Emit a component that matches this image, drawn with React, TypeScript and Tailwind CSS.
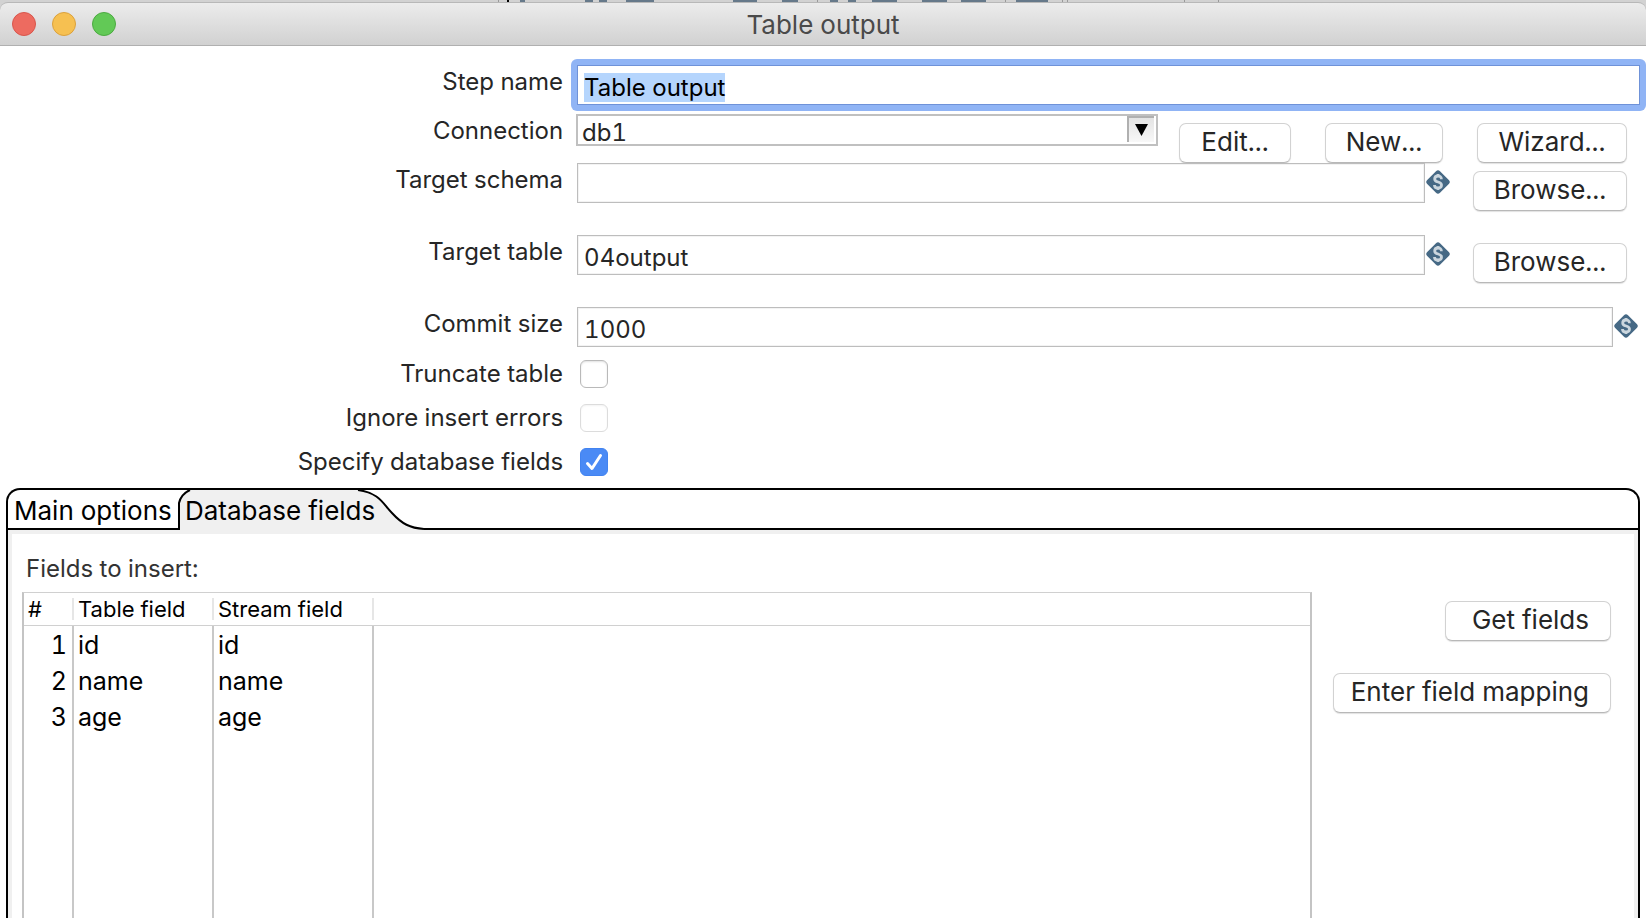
import { useEffect, useRef } from "react";
import type { ReactNode } from "react";

const fieldClass =
  "h-[40px] min-w-0 flex-1 ml-px border border-[#bdbdbd] bg-white px-[6px] pt-[5px] text-[24px] leading-[32px] text-[#262626] shadow-[inset_0_0_0_1px_#f3f3f3] outline-none";

function Row({ id, label, className, children }: { id: string; label: string; className?: string; children: ReactNode }) {
  return (
    <div className={`flex items-start ${className ?? ""}`}>
      <label htmlFor={id} className="w-[35vw] shrink-0 pt-[3px] pr-[13px] text-right text-[24px] leading-[28px] text-[#262626]">
        {label}
      </label>
      {children}
    </div>
  );
}

function PushButton({ className, children }: { className: string; children: ReactNode }) {
  return (
    <button
      type="button"
      className={`h-[40px] shrink-0 rounded-[7px] border border-[#d2d2d2] border-b-[#b8b8b8] bg-white pb-[3px] text-[26px] leading-[32px] whitespace-nowrap text-[#262626] shadow-[0_1px_1px_rgba(0,0,0,0.12)] ${className}`}
    >
      {children}
    </button>
  );
}

function VariableIcon() {
  return (
    <svg className="mt-[7px] ml-px h-[24px] w-[24px] shrink-0" viewBox="0 0 24 24" aria-hidden="true">
      <path d="M10 1.2Q12-.8 14 1.2L22.8 10Q24.8 12 22.8 14L14 22.8Q12 24.8 10 22.8L1.2 14Q-.8 12 1.2 10Z" fill="#466985" />
      <path d="M15.400 9.200C15.400 6.900 14 6 12 6S8.700 7 8.700 8.900C8.700 13 15.500 11 15.500 15C15.500 17 14 18 12 18S8.500 17 8.500 14.900M12 4V6M12 18V20" fill="none" stroke="#cbd6de" strokeWidth="2.8" />
    </svg>
  );
}

function Check({ id, on, disabled }: { id: string; on?: boolean; disabled?: boolean }) {
  return (
    <span className="relative mt-[3px] ml-[4px] h-[28px] w-[28px]">
      <input
        id={id}
        type="checkbox"
        defaultChecked={on}
        disabled={disabled}
        className="block h-[28px] w-[28px] appearance-none rounded-[6px] border border-[#b9b9b9] bg-white shadow-[inset_0_1px_2px_rgba(0,0,0,0.12)] checked:border-[#4283f0] checked:bg-[#4a8af5] checked:shadow-none disabled:border-[#dcdcdc] disabled:shadow-[inset_0_1px_2px_rgba(0,0,0,0.05)]"
      />
      {on && (
        <svg className="pointer-events-none absolute inset-0" viewBox="0 0 28 28" aria-hidden="true">
          <path d="M7.500 15.500L12 20.500L20.500 7.500" fill="none" stroke="#fff" strokeWidth="3" strokeLinecap="round" strokeLinejoin="round" />
        </svg>
      )}
    </span>
  );
}

const rows = ["id", "name", "age"];

export default function App() {
  const stepName = useRef<HTMLInputElement>(null);
  useEffect(() => {
    stepName.current?.focus();
    stepName.current?.select();
  }, []);

  return (
    <div className="flex h-screen flex-col overflow-hidden bg-white font-['Inter','Liberation_Sans',sans-serif] tabular-nums">
      <div className="h-[46px] shrink-0 bg-[#d2d2d2]">
        <svg className="block h-[2px] w-full" viewBox="0 0 1646 2" preserveAspectRatio="none" aria-hidden="true">
          <path d="M507 0h2v2h-2z" fill="#000" />
          <path d="M520 0h5v2h-5zM585 0h8v2h-8zM599 0h8v2h-8zM626 0h28v2h-28zM733 0h24v2h-24zM782 0h16v2h-16zM830 0h8v2h-8zM848 0h8v2h-8zM872 0h25v2h-25zM922 0h25v2h-25zM961 0h25v2h-25zM1016 0h32v2h-32z" fill="#66798a" />
          <path d="M498 0h1v2h-1zM817 0h1v2h-1zM1005 0h1v2h-1zM1062 0h1v2h-1zM1067 0h1v2h-1zM1184 0h1v2h-1zM1218 0h1v2h-1z" fill="#999" />
        </svg>
        <header className="flex h-[44px] items-center rounded-t-[8px] border-t border-b border-t-[#b8b8b8] border-b-[#b0b0b0] bg-linear-to-b from-[#ececec] to-[#d1d1d1]">
          <div className="flex flex-1 gap-[16px] pl-[12px]">
            <button type="button" aria-label="Close" className="h-[24px] w-[24px] rounded-full border border-[#d8564c] bg-[#ed6b60]" />
            <button type="button" aria-label="Minimize" className="h-[24px] w-[24px] rounded-full border border-[#dba13c] bg-[#f6c051]" />
            <button type="button" aria-label="Zoom" className="h-[24px] w-[24px] rounded-full border border-[#4caa41] bg-[#62c956]" />
          </div>
          <h1 className="pt-px text-[26px] leading-[32px] text-[#4a4a4a]">Table output</h1>
          <div className="flex-1 pr-[12px]" />
        </header>
      </div>

      <Row id="step" label="Step name" className="mt-[19px] pr-[6px]">
        <div className="-my-[6px] -mr-[6px] -ml-[5px] flex min-w-0 flex-1 rounded-[6px] bg-[#90b4f5] p-[6px]">
          <input
            id="step"
            ref={stepName}
            defaultValue="Table output"
            className="h-[40px] min-w-0 flex-1 border border-[#6f92d8] bg-white px-[6px] pt-[5px] text-[24px] leading-[32px] text-black outline-none selection:bg-[#b5d5fd] selection:text-black"
          />
        </div>
      </Row>
      <Row id="connection" label="Connection" className="mt-[9px] h-[49px] pr-[19px]">
        <div className="relative h-[32px] min-w-0 flex-1">
          <select
            id="connection"
            className="block h-[32px] w-full appearance-none border-2 border-[#c0c0c0] bg-white px-[4px] pt-[5px] text-[24px] leading-[24px] text-[#262626] outline-none"
          >
            <option>db1</option>
          </select>
          <span className="pointer-events-none absolute top-[2px] right-[4px] flex h-[26px] w-[27px] justify-center border-t-2 border-l-2 border-[#b0b0b0] bg-linear-to-b from-[#e4e4e4] to-[#f8f8f8] pt-[6px]">
            <svg className="h-[12px] w-[13px]" viewBox="0 0 13 12" aria-hidden="true">
              <path d="M0 0H13L6.500 12Z" fill="#000" />
            </svg>
          </span>
        </div>
        <div className="ml-[21px] flex shrink-0 gap-[34px] pt-[9px]">
          <PushButton className="w-[112px]">Edit...</PushButton>
          <PushButton className="w-[118px]">New...</PushButton>
          <PushButton className="w-[150px]">Wizard...</PushButton>
        </div>
      </Row>
      <Row id="schema" label="Target schema" className="h-[72px] pr-[19px]">
        <input id="schema" className={fieldClass} />
        <VariableIcon />
        <PushButton className="mt-[8px] ml-[23px] w-[154px]">Browse...</PushButton>
      </Row>
      <Row id="table" label="Target table" className="h-[72px] pr-[19px]">
        <input id="table" defaultValue="04output" className={fieldClass} />
        <VariableIcon />
        <PushButton className="mt-[8px] ml-[23px] w-[154px]">Browse...</PushButton>
      </Row>
      <Row id="commit" label="Commit size" className="pr-[8px]">
        <input id="commit" defaultValue="1000" className={fieldClass} />
        <VariableIcon />
      </Row>
      <div className="mt-[10px] flex flex-col gap-[13px]">
        <Row id="truncate" label="Truncate table">
          <Check id="truncate" />
        </Row>
        <Row id="ignore" label="Ignore insert errors">
          <Check id="ignore" disabled />
        </Row>
        <Row id="specify" label="Specify database fields">
          <Check id="specify" on />
        </Row>
      </div>

      <section className="mx-[6px] mt-[12px] flex min-h-0 flex-1 flex-col rounded-t-[14px] border-x-2 border-t-2 border-black">
        <div role="tablist" className="flex h-[40px] shrink-0 border-b-2 border-black text-[26px] leading-[32px] whitespace-nowrap text-black">
          <button type="button" role="tab" aria-selected="false" className="h-[38px] w-[170px] pt-[4px] pl-[6px] text-left">
            Main options
          </button>
          <button type="button" role="tab" aria-selected="true" className="relative h-[38px] w-[246px] pt-[4px] pl-[7px] text-left">
            <svg className="absolute top-0 left-0 h-[40px] w-[246px]" viewBox="0 0 246 40" aria-hidden="true">
              <path d="M1 40V13Q3 4 12 0H180C202 3 205 14 214 23C224 34 232 38 246 39V40Z" fill="#f0f0f0" />
              <path d="M1 40V13Q3 4 12 0M180 0C202 3 205 14 214 23C224 34 232 38 246 39" fill="none" stroke="#000" strokeWidth="2" />
            </svg>
            <span className="relative">Database fields</span>
          </button>
        </div>
        <div role="tabpanel" className="flex min-h-0 flex-1 flex-col border-x-4 border-t-4 border-[#f0f0f0] pt-[21px] pr-[23px] pl-[10px]">
          <h2 className="pl-[4px] text-[24px] leading-[28px] text-[#333]">Fields to insert:</h2>
          <div className="mt-[9px] flex min-h-0 flex-1">
            <div className="min-w-0 flex-1 border-t border-r-2 border-l-2 border-t-[#d0d0d0] border-r-[#c4c4c4] border-l-[#c4c4c4]">
              <table className="h-full w-full table-fixed border-separate border-spacing-0 text-left text-black">
                <colgroup>
                  <col className="w-[50px]" />
                  <col className="w-[140px]" />
                  <col className="w-[160px]" />
                  <col />
                </colgroup>
                <thead>
                  <tr className="h-[33px] text-[22px] leading-[22px] whitespace-nowrap">
                    {["#", "Table field", "Stream field"].map((h) => (
                      <th key={h} className="border-b border-[#d0d0d0] p-0 font-normal">
                        <div className="h-[22px] border-r-2 border-[#e6e6e6] pl-[4px]">{h}</div>
                      </th>
                    ))}
                    <td className="border-b border-[#d0d0d0]" />
                  </tr>
                </thead>
                <tbody className="text-[25px] leading-[34px]">
                  {rows.map((name, i) => (
                    <tr key={name} className="h-[36px]">
                      <td className="border-r-2 border-[#c8c8c8] p-0 pt-[2px] pr-[5px] text-right">{i + 1}</td>
                      <td className="border-r-2 border-[#c8c8c8] p-0 pt-[2px] pl-[4px]">{name}</td>
                      <td className="border-r-2 border-[#c8c8c8] p-0 pt-[2px] pl-[4px]">{name}</td>
                      <td />
                    </tr>
                  ))}
                  <tr className="h-full" aria-hidden="true">
                    <td className="border-r-2 border-[#c8c8c8]" />
                    <td className="border-r-2 border-[#c8c8c8]" />
                    <td className="border-r-2 border-[#c8c8c8]" />
                    <td />
                  </tr>
                </tbody>
              </table>
            </div>
            <div className="flex w-[299px] shrink-0 flex-col items-end gap-[32px] pt-[9px]">
              <PushButton className="w-[166px] pr-[21px] text-right">Get fields</PushButton>
              <PushButton className="w-[278px] pr-[21px] text-right">Enter field mapping</PushButton>
            </div>
          </div>
        </div>
      </section>
    </div>
  );
}
